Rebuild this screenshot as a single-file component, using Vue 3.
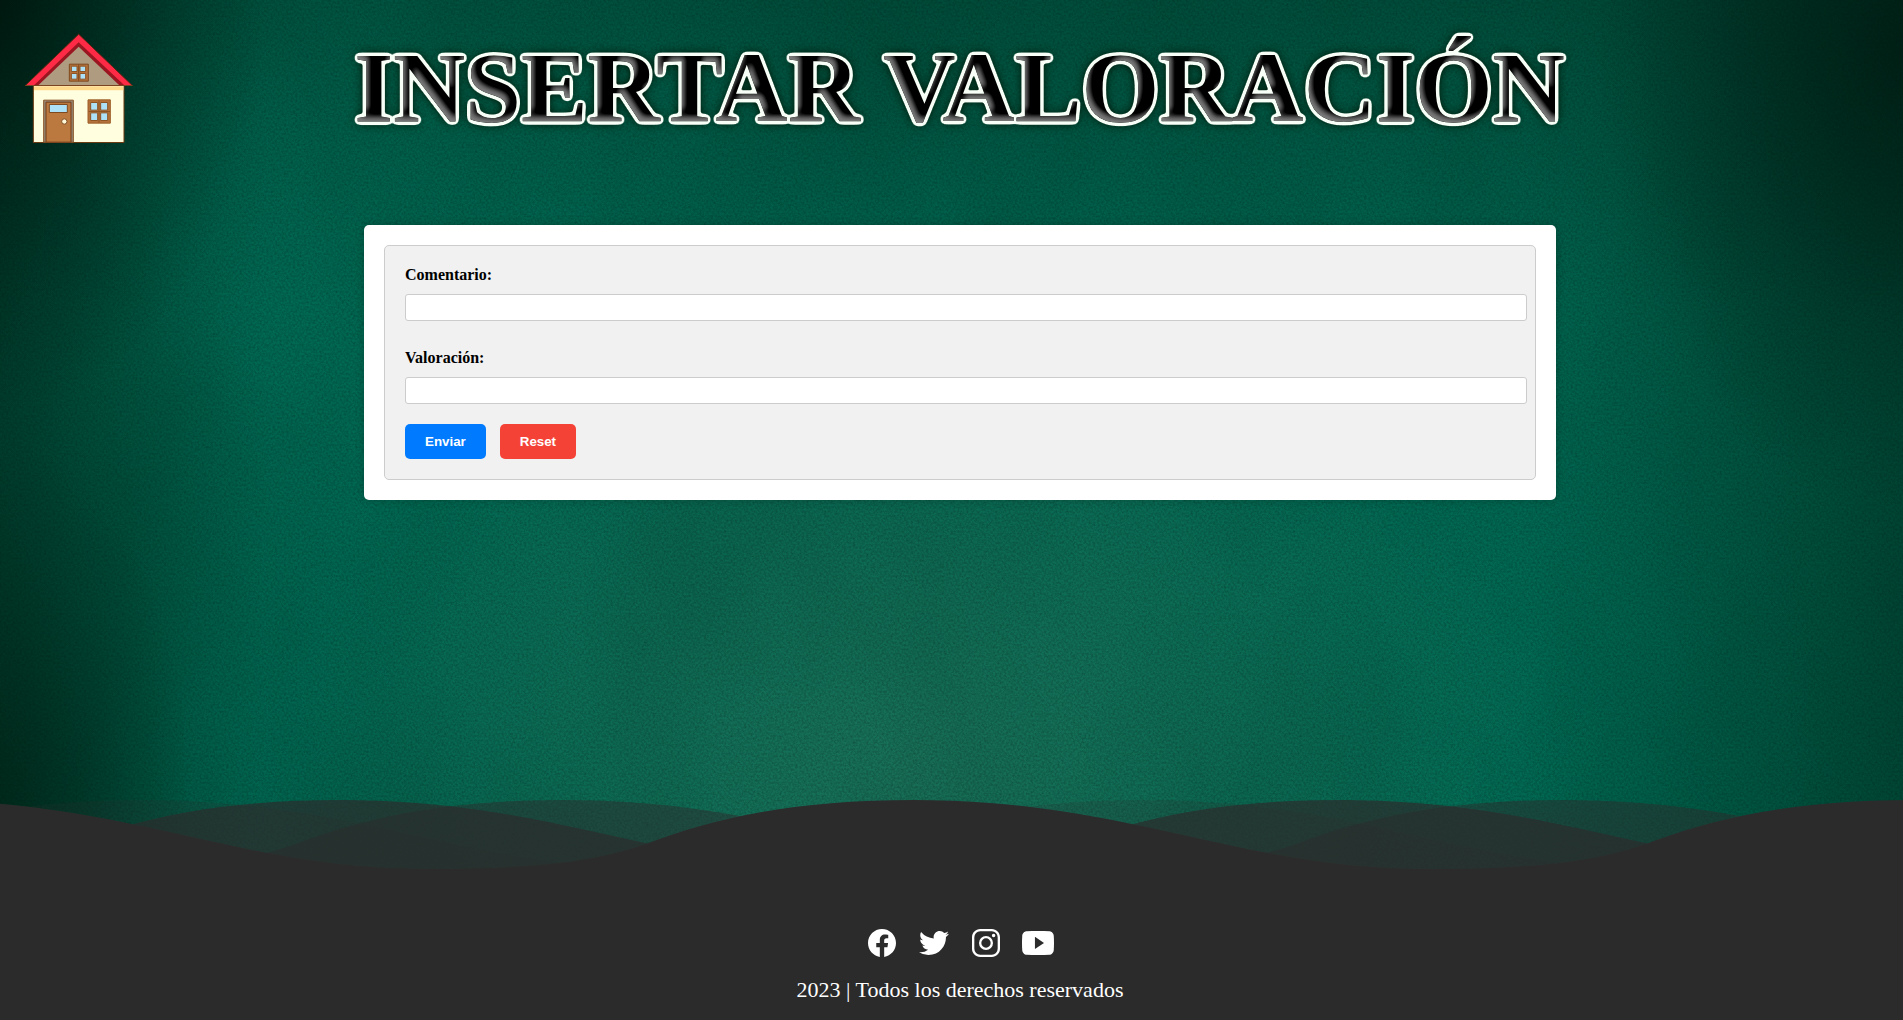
<script setup>
import { ref } from 'vue'

const comentario = ref('')
const valoracion = ref('')

const waves = [
  { id: 'wave-back', x: 144, opacity: 0.2 },
  { id: 'wave-middle', x: 564, opacity: 0.5 },
  { id: 'wave-near', x: 340, opacity: 0.7 },
  { id: 'wave-front', x: 914, opacity: 1 }
]

const social = [
  {
    name: 'Facebook',
    path: 'M480 257.35c0-123.7-100.3-224-224-224s-224 100.3-224 224c0 111.8 81.9 204.47 189 221.29V322.12h-56.89v-64.77H221V208c0-56.13 33.45-87.16 84.61-87.16 24.51 0 50.15 4.38 50.15 4.38v55.13H327.5c-27.81 0-36.51 17.26-36.51 35v42h62.12l-9.92 64.77H291v156.54c107.1-16.81 189-109.48 189-221.31z'
  },
  {
    name: 'Twitter',
    path: 'M496 109.5a201.8 201.8 0 01-56.55 15.3 97.51 97.51 0 0043.33-53.6 197.74 197.74 0 01-62.56 23.5A99.14 99.14 0 00348.31 64c-54.42 0-98.46 43.4-98.46 96.9a93.21 93.21 0 002.54 22.1 280.7 280.7 0 01-203-101.3A95.69 95.69 0 0036 130.4c0 33.6 17.53 63.3 44 80.7A97.5 97.5 0 0135.22 199v1.2c0 47 34 86.1 79 95a100.76 100.76 0 01-25.94 3.4 94.38 94.38 0 01-18.51-1.8c12.51 38.5 48.92 66.5 92.05 67.3A199.59 199.59 0 0139.5 405.6a203 203 0 01-23.5-1.4A278.68 278.68 0 00166.74 448c181.36 0 280.44-147.7 280.44-275.8 0-4.2-.11-8.4-.31-12.5A198.48 198.48 0 00496 109.5z'
  },
  {
    name: 'Instagram',
    path: 'M349.33 69.33a93.62 93.62 0 0193.34 93.34v186.66a93.62 93.62 0 01-93.34 93.34H162.67a93.62 93.62 0 01-93.34-93.34V162.67a93.62 93.62 0 0193.34-93.34h186.66m0-37.33H162.67C90.8 32 32 90.8 32 162.67v186.66C32 421.2 90.8 480 162.67 480h186.66C421.2 480 480 421.2 480 349.33V162.67C480 90.8 421.2 32 349.33 32zM377.33 162.67a28 28 0 1128-28 27.94 27.94 0 01-28 28zM256 181.33A74.67 74.67 0 11181.33 256 74.75 74.75 0 01256 181.33m0-37.33a112 112 0 10112 112 112 112 0 00-112-112z'
  },
  {
    name: 'YouTube',
    path: 'M508.64 148.79c0-45-33.1-81.2-74-81.2C379.24 65 322.74 64 265 64h-18c-57.6 0-114.2 1-169.6 3.6C36.6 67.6 3.5 104 3.5 149 1 184.59-.06 220.19 0 255.79q-.15 53.4 3.4 106.9c0 45 33.1 81.5 73.9 81.5 58.2 2.7 117.9 3.9 178.6 3.8q91.2.3 178.6-3.8c40.9 0 74-36.5 74-81.5 2.4-35.7 3.5-71.3 3.4-107q.34-53.4-3.26-106.9zM207 353.89v-196.5l145 98.2z'
  }
]
</script>

<template>
  <div class="page">
    <svg class="texture" aria-hidden="true">
      <defs>
        <filter id="grain" x="0" y="0" width="100%" height="100%" color-interpolation-filters="sRGB">
          <feTurbulence type="fractalNoise" baseFrequency="0.45" numOctaves="3" seed="7" />
          <feColorMatrix values="0 0 0 0 0  0 0 0 0 0.08  0 0 0 0 0.06  1.6 0 0 0 -0.5" />
        </filter>
        <filter id="blotch" x="0" y="0" width="100%" height="100%" color-interpolation-filters="sRGB">
          <feTurbulence type="fractalNoise" baseFrequency="0.005 0.003" numOctaves="4" seed="3" />
          <feColorMatrix values="0 0 0 0 0  0 0 0 0 0.15  0 0 0 0 0.1  2 0 0 0 -0.8" />
        </filter>
        <!-- white rounded outline, grey sheen along the lower side of the strokes, dark glow behind -->
        <filter id="bevel" x="-5%" y="-20%" width="110%" height="140%" color-interpolation-filters="sRGB">
          <feGaussianBlur in="SourceAlpha" stdDeviation="2" result="spread" />
          <feColorMatrix in="spread" values="0 0 0 0 0.97  0 0 0 0 1  0 0 0 0 0.97  0 0 0 18 -0.5" result="outline" />
          <feGaussianBlur in="SourceAlpha" stdDeviation="3" result="soft" />
          <feOffset in="soft" dx="4" dy="-6" result="raised" />
          <feFlood flood-color="#7c7c7c" result="grey" />
          <feComposite in="grey" in2="SourceAlpha" operator="in" result="greyText" />
          <feComposite in="greyText" in2="raised" operator="out" result="rim" />
          <feColorMatrix in="rim" values="1 0 0 0 0  0 1 0 0 0  0 0 1 0 0  0 0 0 1.5 -0.5" result="sheen" />
          <feGaussianBlur in="SourceAlpha" stdDeviation="6" result="halo" />
          <feColorMatrix in="halo" values="0 0 0 0 0  0 0 0 0 0.1  0 0 0 0 0.03  0 0 0 2 0" result="glow" />
          <feMerge>
            <feMergeNode in="glow" />
            <feMergeNode in="outline" />
            <feMergeNode in="SourceGraphic" />
            <feMergeNode in="sheen" />
          </feMerge>
        </filter>
      </defs>
      <rect width="100%" height="100%" filter="url(#blotch)" opacity="0.12" />
      <rect width="100%" height="100%" filter="url(#grain)" opacity="0.3" />
    </svg>

    <header class="header">
      <a class="home" href="#" aria-label="Inicio">
        <svg viewBox="72 100 330 332" width="110" height="111" stroke-width="3">
          <path d="M100 257H372V428H100Z" fill="#ffffe0" stroke="#6b3a12" />
          <path d="M102 259H370V271H102Z" fill="#ffd98c" />
          <path d="M236 103L397 257H76Z" fill="#ff2b46" stroke="#5c2410" />
          <path d="M236 127L373 256H102Z" fill="#9a1620" />
          <path d="M236 141L358 256H115Z" fill="#af9c80" />
          <path d="M76 257H397" stroke="#7a4420" />
          <path d="M208 193H265V244H208Z" fill="#b5713a" stroke="#7f4a1f" />
          <path d="M214 199H231V215H214ZM240 199H257V215H240ZM214 221H231V238H214ZM240 221H257V238H240Z" fill="#ace1f8" stroke="#8f5424" />
          <path d="M236 194V243" stroke="#7f4a1f" />
          <path d="M131 301H220V427H131Z" fill="#958673" stroke="#8b5328" />
          <path d="M138 307H213V427H138Z" fill="#bb7940" stroke="#743d17" />
          <path d="M148 314H202V338H148Z" fill="#ace1f8" stroke="#7f4a1f" />
          <circle cx="193" cy="365" r="8" fill="#fff8d8" stroke="#7f4a1f" />
          <path d="M264 300H331V370H264Z" fill="#b5713a" stroke="#9d6029" />
          <path d="M272 308H293V331H272ZM302 308H323V331H302ZM272 339H293V362H272ZM302 339H323V362H302Z" fill="#ace1f8" stroke="#8f5424" />
          <path d="M297 302V369M266 335H330" stroke="#8f5424" />
        </svg>
      </a>
      <h1 class="title">INSERTAR VALORACIÓN</h1>
    </header>

    <main class="main">
      <form class="card" @submit.prevent>
        <div class="fields">
          <label for="comentario">Comentario:</label>
          <input id="comentario" v-model="comentario" type="text" />
          <label for="valoracion">Valoración:</label>
          <input id="valoracion" v-model="valoracion" type="text" />
          <div class="actions">
            <button class="send" type="submit">Enviar</button>
            <button class="reset" type="reset">Reset</button>
          </div>
        </div>
      </form>
    </main>

    <svg class="waves" aria-hidden="true">
      <defs>
        <pattern v-for="wave in waves" :id="wave.id" :key="wave.id" :x="wave.x" y="0" width="1000" height="100" patternUnits="userSpaceOnUse">
          <path d="M0 0C215 0 325 69 514 69C620 69 680 62 732 44C800 18 880 0 1000 0V100H0Z" fill="#2b2b2b" />
        </pattern>
      </defs>
      <rect v-for="wave in waves" :key="wave.id" width="100%" height="100%" :fill="`url(#${wave.id})`" :opacity="wave.opacity" />
    </svg>

    <footer class="footer">
      <nav class="social">
        <a v-for="item in social" :key="item.name" href="#" :aria-label="item.name">
          <svg viewBox="0 0 512 512" width="32" height="32"><path :d="item.path" fill="#fff" /></svg>
        </a>
      </nav>
      <p>2023 | Todos los derechos reservados</p>
    </footer>
  </div>
</template>

<style>
body {
  margin: 0;
}
</style>

<style scoped>
.page {
  position: relative;
  display: flex;
  flex-direction: column;
  min-height: 100vh;
  overflow: hidden;
  font-family: "Liberation Serif", "Times New Roman", serif;
  background:
    radial-gradient(ellipse 36% 50% at 48% 76%, rgba(52, 124, 98, 0.5), transparent),
    radial-gradient(ellipse 22% 40% at 76% 80%, rgba(0, 115, 90, 0.35), transparent),
    radial-gradient(ellipse 22% 45% at 20% 20%, rgba(0, 115, 90, 0.35), transparent),
    radial-gradient(ellipse 16% 45% at 100% 5%, rgba(0, 20, 12, 0.7), transparent),
    radial-gradient(ellipse 14% 40% at 0% 0%, rgba(0, 18, 10, 0.8), transparent),
    radial-gradient(ellipse 10% 35% at 0% 78%, rgba(0, 30, 18, 0.6), transparent),
    linear-gradient(90deg, rgba(0, 40, 26, 0.65), transparent 14%, transparent 80%, rgba(0, 40, 26, 0.5)),
    linear-gradient(180deg, rgba(0, 40, 28, 0.4), transparent 30%),
    #006751;
}

.texture {
  position: absolute;
  inset: 0;
  width: 100%;
  height: 100%;
}

.header,
.main,
.waves,
.footer {
  position: relative;
}

.header {
  display: grid;
  grid-template-columns: 110px 1fr 94px;
  padding: 33px 24px 0;
}

.home {
  display: block;
  height: 111px;
}

.home svg {
  display: block;
}

.title {
  margin: 0;
  color: #000;
  font-size: 100px;
  line-height: 109px;
  text-align: center;
  white-space: nowrap;
  filter: url(#bevel);
}

.main {
  display: flex;
  flex: 1;
  justify-content: center;
  align-items: flex-start;
  padding: 81px 0 40px 17px;
}

.card {
  box-sizing: border-box;
  width: 100%;
  max-width: 1192px;
  padding: 20px;
  border-radius: 5px;
  background: #fff;
  box-shadow: 0 0 10px rgba(0, 0, 0, 0.2);
}

.fields {
  padding: 20px;
  border: 1px solid #ccc;
  border-radius: 5px;
  background: #f1f1f1;
}

label {
  display: block;
  margin-bottom: 10px;
  font-size: 16px;
  font-weight: bold;
  line-height: 18px;
}

input {
  display: block;
  box-sizing: border-box;
  width: calc(100% + 12px);
  height: 27px;
  margin-bottom: 28px;
  padding: 5px;
  border: 1px solid #ccc;
  border-radius: 3px;
  background: #fff;
}

.actions {
  display: flex;
  gap: 14px;
  margin-top: -8px;
}

button {
  height: 35px;
  padding: 10px 20px;
  border: 0;
  border-radius: 5px;
  color: #fff;
  font-family: "Liberation Sans", Arial, sans-serif;
  font-weight: bold;
}

.send {
  background: #007bff;
}

.reset {
  background: #f44336;
}

.waves {
  display: block;
  width: 100%;
  height: 100px;
}

.footer {
  display: flex;
  flex-direction: column;
  align-items: center;
  gap: 18px;
  padding: 27px 0 18px 17px;
  background: #2b2b2b;
}

.social {
  display: flex;
  gap: 20px;
}

.social a,
.social svg {
  display: block;
}

.footer p {
  margin: 0;
  color: #fff;
  font-size: 22px;
  line-height: 25px;
}
</style>
